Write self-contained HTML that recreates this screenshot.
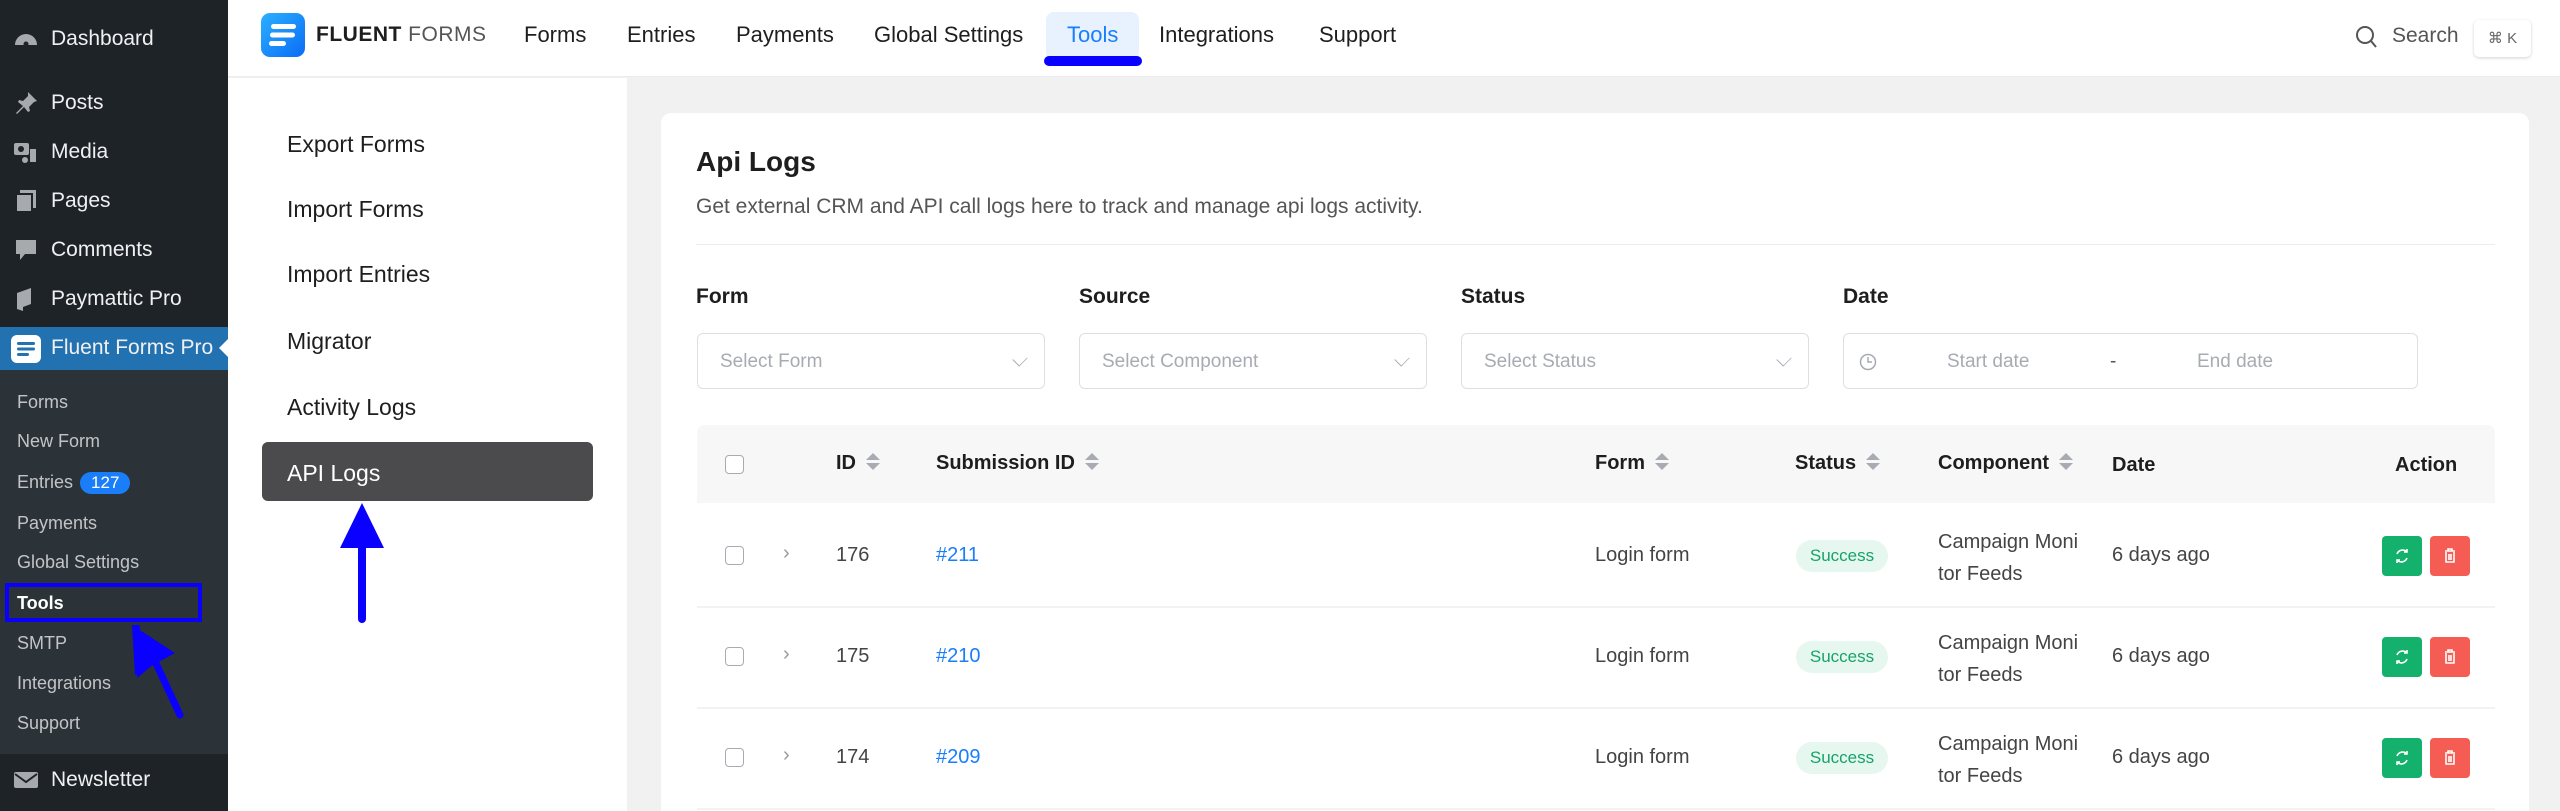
<!DOCTYPE html>
<html style="overflow:hidden;width:2560px;height:811px"><head><meta charset="utf-8"><style>
*{margin:0;padding:0;box-sizing:border-box}
body{width:2560px;height:811px;overflow:hidden;background:#f1f1f1;font-family:"Liberation Sans",Arial,sans-serif;position:relative}
.a{position:absolute;white-space:nowrap}
.sb{position:absolute;left:0;top:0;width:228px;height:811px;background:#1d2327}
.sbi{position:absolute;left:51px;color:#f0f0f1;font-size:21px;line-height:24px}
.ico{position:absolute;left:13px;width:26px;height:26px}
.sub{position:absolute;left:17px;color:#c3c4c7;font-size:18px;line-height:22px}
.nav{position:absolute;top:22px;font-size:22px;color:#1e1e1e;line-height:26px}
.lp{position:absolute;left:287px;font-size:23px;color:#1e1e1e;line-height:26px}
.lbl{position:absolute;top:285px;font-size:21px;font-weight:bold;color:#1e1e1e}
.sel{position:absolute;top:333px;height:56px;border:1px solid #dcdfe6;border-radius:6px;background:#fff}
.sel span{position:absolute;left:22px;top:17px;font-size:19px;color:#a8abb2}
.chev{position:absolute;right:18px;top:19px;width:12px;height:12px;border-right:1.5px solid #a8abb2;border-bottom:1.5px solid #a8abb2;transform:rotate(45deg) scaleX(.8)}
.th{position:absolute;top:452px;font-size:20px;font-weight:bold;color:#1e1e1e}
.sort{display:inline-block;width:0;height:0;vertical-align:middle;margin-left:17px;position:relative;top:-3px}
.sort:before{content:"";position:absolute;left:-7px;top:-8px;border:7px solid transparent;border-top:0;border-bottom:7px solid #a8abb2}
.sort:after{content:"";position:absolute;left:-7px;top:2px;border:7px solid transparent;border-bottom:0;border-top:7px solid #a8abb2}
.cb{position:absolute;left:725px;width:19px;height:19px;border:1.5px solid #a8abb2;border-radius:4px;background:#fff}
.td{position:absolute;font-size:20px;color:#444}
.link{color:#1a7efb}
.pill{position:absolute;left:1796px;width:92px;height:32px;border-radius:16px;background:#e6f7ef;color:#16a36a;font-size:17px;text-align:center;line-height:32px}
.btn{position:absolute;width:40px;height:40px;border-radius:4px}
.rowl{position:absolute;left:697px;width:1798px;height:2px;background:#f2f2f2}
</style></head><body>

<div class="sb"></div>
<div class="a" style="left:0;top:370px;width:228px;height:384px;background:#2c3338"></div>
<div class="a" style="left:0;top:327px;width:228px;height:43px;background:#2271b1"></div>
<div class="a" style="left:219px;top:339px;width:0;height:0;border-top:9px solid transparent;border-bottom:9px solid transparent;border-right:9px solid #fff"></div>

<svg class="ico" style="top:26px" viewBox="0 0 26 26"><path d="M2 19a11 11 0 0 1 22 0z" fill="#a7aaad"/><circle cx="13" cy="18" r="2.5" fill="#1d2327"/></svg>
<div class="sbi" style="top:27px">Dashboard</div>
<svg class="ico" style="top:90px" viewBox="0 0 26 26"><path d="M15 2l9 9-3 1-5 5 1 4-2 1-4-5-7 7-1-1 7-7-5-4 1-2 4 1 5-5z" fill="#a7aaad"/></svg>
<div class="sbi" style="top:91px">Posts</div>
<svg class="ico" style="top:139px" viewBox="0 0 26 26"><rect x="1" y="4" width="15" height="12" rx="2" fill="#a7aaad"/><circle cx="8" cy="10" r="3" fill="#1d2327"/><rect x="17" y="10" width="6" height="13" fill="#a7aaad"/><circle cx="12" cy="21" r="3" fill="#a7aaad"/></svg>
<div class="sbi" style="top:140px">Media</div>
<svg class="ico" style="top:188px" viewBox="0 0 26 26"><rect x="7" y="2" width="16" height="18" fill="#a7aaad"/><rect x="3" y="6" width="16" height="18" fill="#a7aaad" stroke="#1d2327" stroke-width="2"/></svg>
<div class="sbi" style="top:189px">Pages</div>
<svg class="ico" style="top:237px" viewBox="0 0 26 26"><path d="M3 3h20v14H12l-5 6v-6H3z" fill="#a7aaad"/></svg>
<div class="sbi" style="top:238px">Comments</div>
<svg class="ico" style="top:286px" viewBox="0 0 26 26"><path d="M4 7l14-5v16l-8 3v4l-6-2z" fill="#a7aaad"/></svg>
<div class="sbi" style="top:287px">Paymattic Pro</div>
<svg class="ico" style="top:335px;left:11px;width:30px;height:28px" viewBox="0 0 30 28"><rect width="30" height="28" rx="6" fill="#fff"/><rect x="6" y="7" width="18" height="3" rx="1.5" fill="#2271b1"/><rect x="6" y="12.5" width="18" height="3" rx="1.5" fill="#2271b1"/><rect x="6" y="18" width="12" height="3" rx="1.5" fill="#2271b1"/></svg>
<div class="sbi" style="top:336px">Fluent Forms Pro</div>

<div class="sub" style="top:391px">Forms</div>
<div class="sub" style="top:430px">New Form</div>
<div class="sub" style="top:471px">Entries <span style="display:inline-block;background:#1a7efb;color:#fff;border-radius:11px;padding:0 11px;font-size:17px;line-height:22px;margin-left:2px">127</span></div>
<div class="sub" style="top:512px">Payments</div>
<div class="sub" style="top:551px">Global Settings</div>
<div class="sub" style="top:592px;color:#fff;font-weight:bold">Tools</div>
<div class="sub" style="top:632px">SMTP</div>
<div class="sub" style="top:672px">Integrations</div>
<div class="sub" style="top:712px">Support</div>
<div class="a" style="left:5px;top:583px;width:197px;height:39px;border:4px solid #0a00ff"></div>
<svg class="a" style="left:128px;top:625px" width="60" height="95" viewBox="0 0 60 95"><path d="M8 0l4 46 14-12 26 56" stroke="#0a00ff" stroke-width="7" fill="none" stroke-linecap="round"/><path d="M4 0l3 50 40-22z" fill="#0a00ff"/></svg>

<svg class="ico" style="top:767px" viewBox="0 0 26 26"><rect x="1" y="5" width="24" height="16" rx="2" fill="#a7aaad"/><path d="M2 7l11 8 11-8" stroke="#1d2327" stroke-width="2" fill="none"/></svg>
<div class="sbi" style="top:768px">Newsletter</div>

<div class="a" style="left:228px;top:0;width:2332px;height:77px;background:#fff;border-bottom:1px solid #ececec"></div>
<svg class="a" style="left:261px;top:13px" width="44" height="44" viewBox="0 0 44 44"><defs><linearGradient id="g" x1="0" y1="0" x2="1" y2="1"><stop offset="0" stop-color="#2bb0ff"/><stop offset="1" stop-color="#0a6cf5"/></linearGradient></defs><rect width="44" height="44" rx="9" fill="url(#g)"/><rect x="10" y="11" width="25" height="5" rx="2.5" fill="#fff"/><rect x="9" y="19.5" width="25" height="5" rx="2.5" fill="#fff"/><rect x="8" y="28" width="17" height="5" rx="2.5" fill="#fff"/></svg>
<div class="a" style="left:316px;top:23px;font-size:21px;color:#1e1e1e;letter-spacing:.5px"><b>FLUENT</b> <span style="color:#555">FORMS</span></div>
<div class="nav" style="left:524px">Forms</div>
<div class="nav" style="left:627px">Entries</div>
<div class="nav" style="left:736px">Payments</div>
<div class="nav" style="left:874px">Global Settings</div>
<div class="a" style="left:1046px;top:12px;width:93px;height:48px;background:#e8f2ff;border-radius:8px"></div>
<div class="nav" style="left:1067px;color:#1a7efb">Tools</div>
<div class="a" style="left:1044px;top:56px;width:98px;height:10px;background:#0a00ff;border-radius:5px"></div>
<div class="nav" style="left:1159px">Integrations</div>
<div class="nav" style="left:1319px">Support</div>
<svg class="a" style="left:2355px;top:24px" width="24" height="26" viewBox="0 0 24 26"><circle cx="10" cy="11" r="8" stroke="#555" stroke-width="2" fill="none"/><path d="M16 17l5 6" stroke="#555" stroke-width="2"/></svg>
<div class="a" style="left:2392px;top:24px;font-size:21px;color:#555">Search</div>
<div class="a" style="left:2474px;top:20px;width:57px;height:37px;border-radius:5px;background:#fff;box-shadow:0 1px 3px rgba(0,0,0,.18);font-size:15px;color:#666;text-align:center;line-height:37px">⌘ K</div>

<div class="a" style="left:228px;top:78px;width:399px;height:733px;background:#fff"></div>
<div class="lp" style="top:131px">Export Forms</div>
<div class="lp" style="top:196px">Import Forms</div>
<div class="lp" style="top:261px">Import Entries</div>
<div class="lp" style="top:328px">Migrator</div>
<div class="lp" style="top:394px">Activity Logs</div>
<div class="a" style="left:262px;top:442px;width:331px;height:59px;background:#4b4b4d;border-radius:6px"></div>
<div class="lp" style="top:460px;color:#fff">API Logs</div>
<svg class="a" style="left:338px;top:503px" width="48" height="122" viewBox="0 0 48 122"><path d="M24 0L46 45H2z" fill="#0a00ff"/><rect x="20" y="40" width="8" height="80" rx="4" fill="#0a00ff"/></svg>

<div class="a" style="left:661px;top:113px;width:1868px;height:698px;background:#fff;border-radius:10px 10px 0 0"></div>
<div class="a" style="left:696px;top:146px;font-size:28px;font-weight:bold;color:#1e1e1e">Api Logs</div>
<div class="a" style="left:696px;top:195px;font-size:21px;color:#555">Get external CRM and API call logs here to track and manage api logs activity.</div>
<div class="a" style="left:696px;top:244px;width:1799px;height:1px;background:#ececec"></div>

<div class="lbl" style="left:696px">Form</div>
<div class="lbl" style="left:1079px">Source</div>
<div class="lbl" style="left:1461px">Status</div>
<div class="lbl" style="left:1843px">Date</div>
<div class="sel" style="left:697px;width:348px"><span>Select Form</span><i class="chev"></i></div>
<div class="sel" style="left:1079px;width:348px"><span>Select Component</span><i class="chev"></i></div>
<div class="sel" style="left:1461px;width:348px"><span>Select Status</span><i class="chev"></i></div>
<div class="sel" style="left:1843px;width:575px">
<svg style="position:absolute;left:14px;top:18px" width="20" height="20" viewBox="0 0 20 20"><circle cx="10" cy="10" r="7.5" stroke="#a8abb2" stroke-width="1.5" fill="none"/><path d="M10 5v5h4" stroke="#a8abb2" stroke-width="1.5" fill="none"/></svg>
<span style="left:103px">Start date</span><span style="left:266px;color:#555">-</span><span style="left:353px">End date</span></div>

<div class="a" style="left:697px;top:425px;width:1798px;height:78px;background:#f7f7f7;border-radius:8px 8px 0 0"></div>
<div class="cb" style="top:455px"></div>
<div class="th" style="left:836px">ID<i class="sort"></i></div>
<div class="th" style="left:936px">Submission ID<i class="sort"></i></div>
<div class="th" style="left:1595px">Form<i class="sort"></i></div>
<div class="th" style="left:1795px">Status<i class="sort"></i></div>
<div class="th" style="left:1938px">Component<i class="sort"></i></div>
<div class="th" style="left:2112px;top:454px">Date</div>
<div class="th" style="left:2395px;top:454px">Action</div>

<div class="cb" style="top:546px"></div>
<div class="td" style="left:783px;top:542px;color:#999">›</div>
<div class="td" style="left:836px;top:544px">176</div>
<div class="td link" style="left:936px;top:544px">#211</div>
<div class="td" style="left:1595px;top:544px">Login form</div>
<div class="pill" style="top:540px">Success</div>
<div class="td" style="left:1938px;top:526px;line-height:32px">Campaign Moni<br>tor Feeds</div>
<div class="td" style="left:2112px;top:544px">6 days ago</div>
<div class="rowl" style="top:606px"></div>

<div class="cb" style="top:647px"></div>
<div class="td" style="left:783px;top:643px;color:#999">›</div>
<div class="td" style="left:836px;top:645px">175</div>
<div class="td link" style="left:936px;top:645px">#210</div>
<div class="td" style="left:1595px;top:645px">Login form</div>
<div class="pill" style="top:641px">Success</div>
<div class="td" style="left:1938px;top:627px;line-height:32px">Campaign Moni<br>tor Feeds</div>
<div class="td" style="left:2112px;top:645px">6 days ago</div>
<div class="rowl" style="top:707px"></div>

<div class="cb" style="top:748px"></div>
<div class="td" style="left:783px;top:744px;color:#999">›</div>
<div class="td" style="left:836px;top:746px">174</div>
<div class="td link" style="left:936px;top:746px">#209</div>
<div class="td" style="left:1595px;top:746px">Login form</div>
<div class="pill" style="top:742px">Success</div>
<div class="td" style="left:1938px;top:728px;line-height:32px">Campaign Moni<br>tor Feeds</div>
<div class="td" style="left:2112px;top:746px">6 days ago</div>
<div class="rowl" style="top:808px"></div>

<div class="btn" style="left:2382px;top:536px;background:#14b16c"></div><div class="btn" style="left:2430px;top:536px;background:#f55d54"></div>
<div class="btn" style="left:2382px;top:637px;background:#14b16c"></div><div class="btn" style="left:2430px;top:637px;background:#f55d54"></div>
<div class="btn" style="left:2382px;top:738px;background:#14b16c"></div><div class="btn" style="left:2430px;top:738px;background:#f55d54"></div>
<svg class="a" style="left:2382px;top:536px" width="88" height="243" viewBox="0 0 88 243">
<g id="ic" fill="none" stroke="#fff" stroke-width="1.6"><path d="M15 18a6 6 0 0 1 10-2M25 22a6 6 0 0 1-10 2"/><path d="M25 13v3h-3M15 27v-3h3"/><path d="M63 15h10M66 15v-2h4v2M64 16v10h8V16M67 18v6M69 18v6"/></g>
<use href="#ic" y="101"/><use href="#ic" y="202"/>
</svg>
</body></html>
